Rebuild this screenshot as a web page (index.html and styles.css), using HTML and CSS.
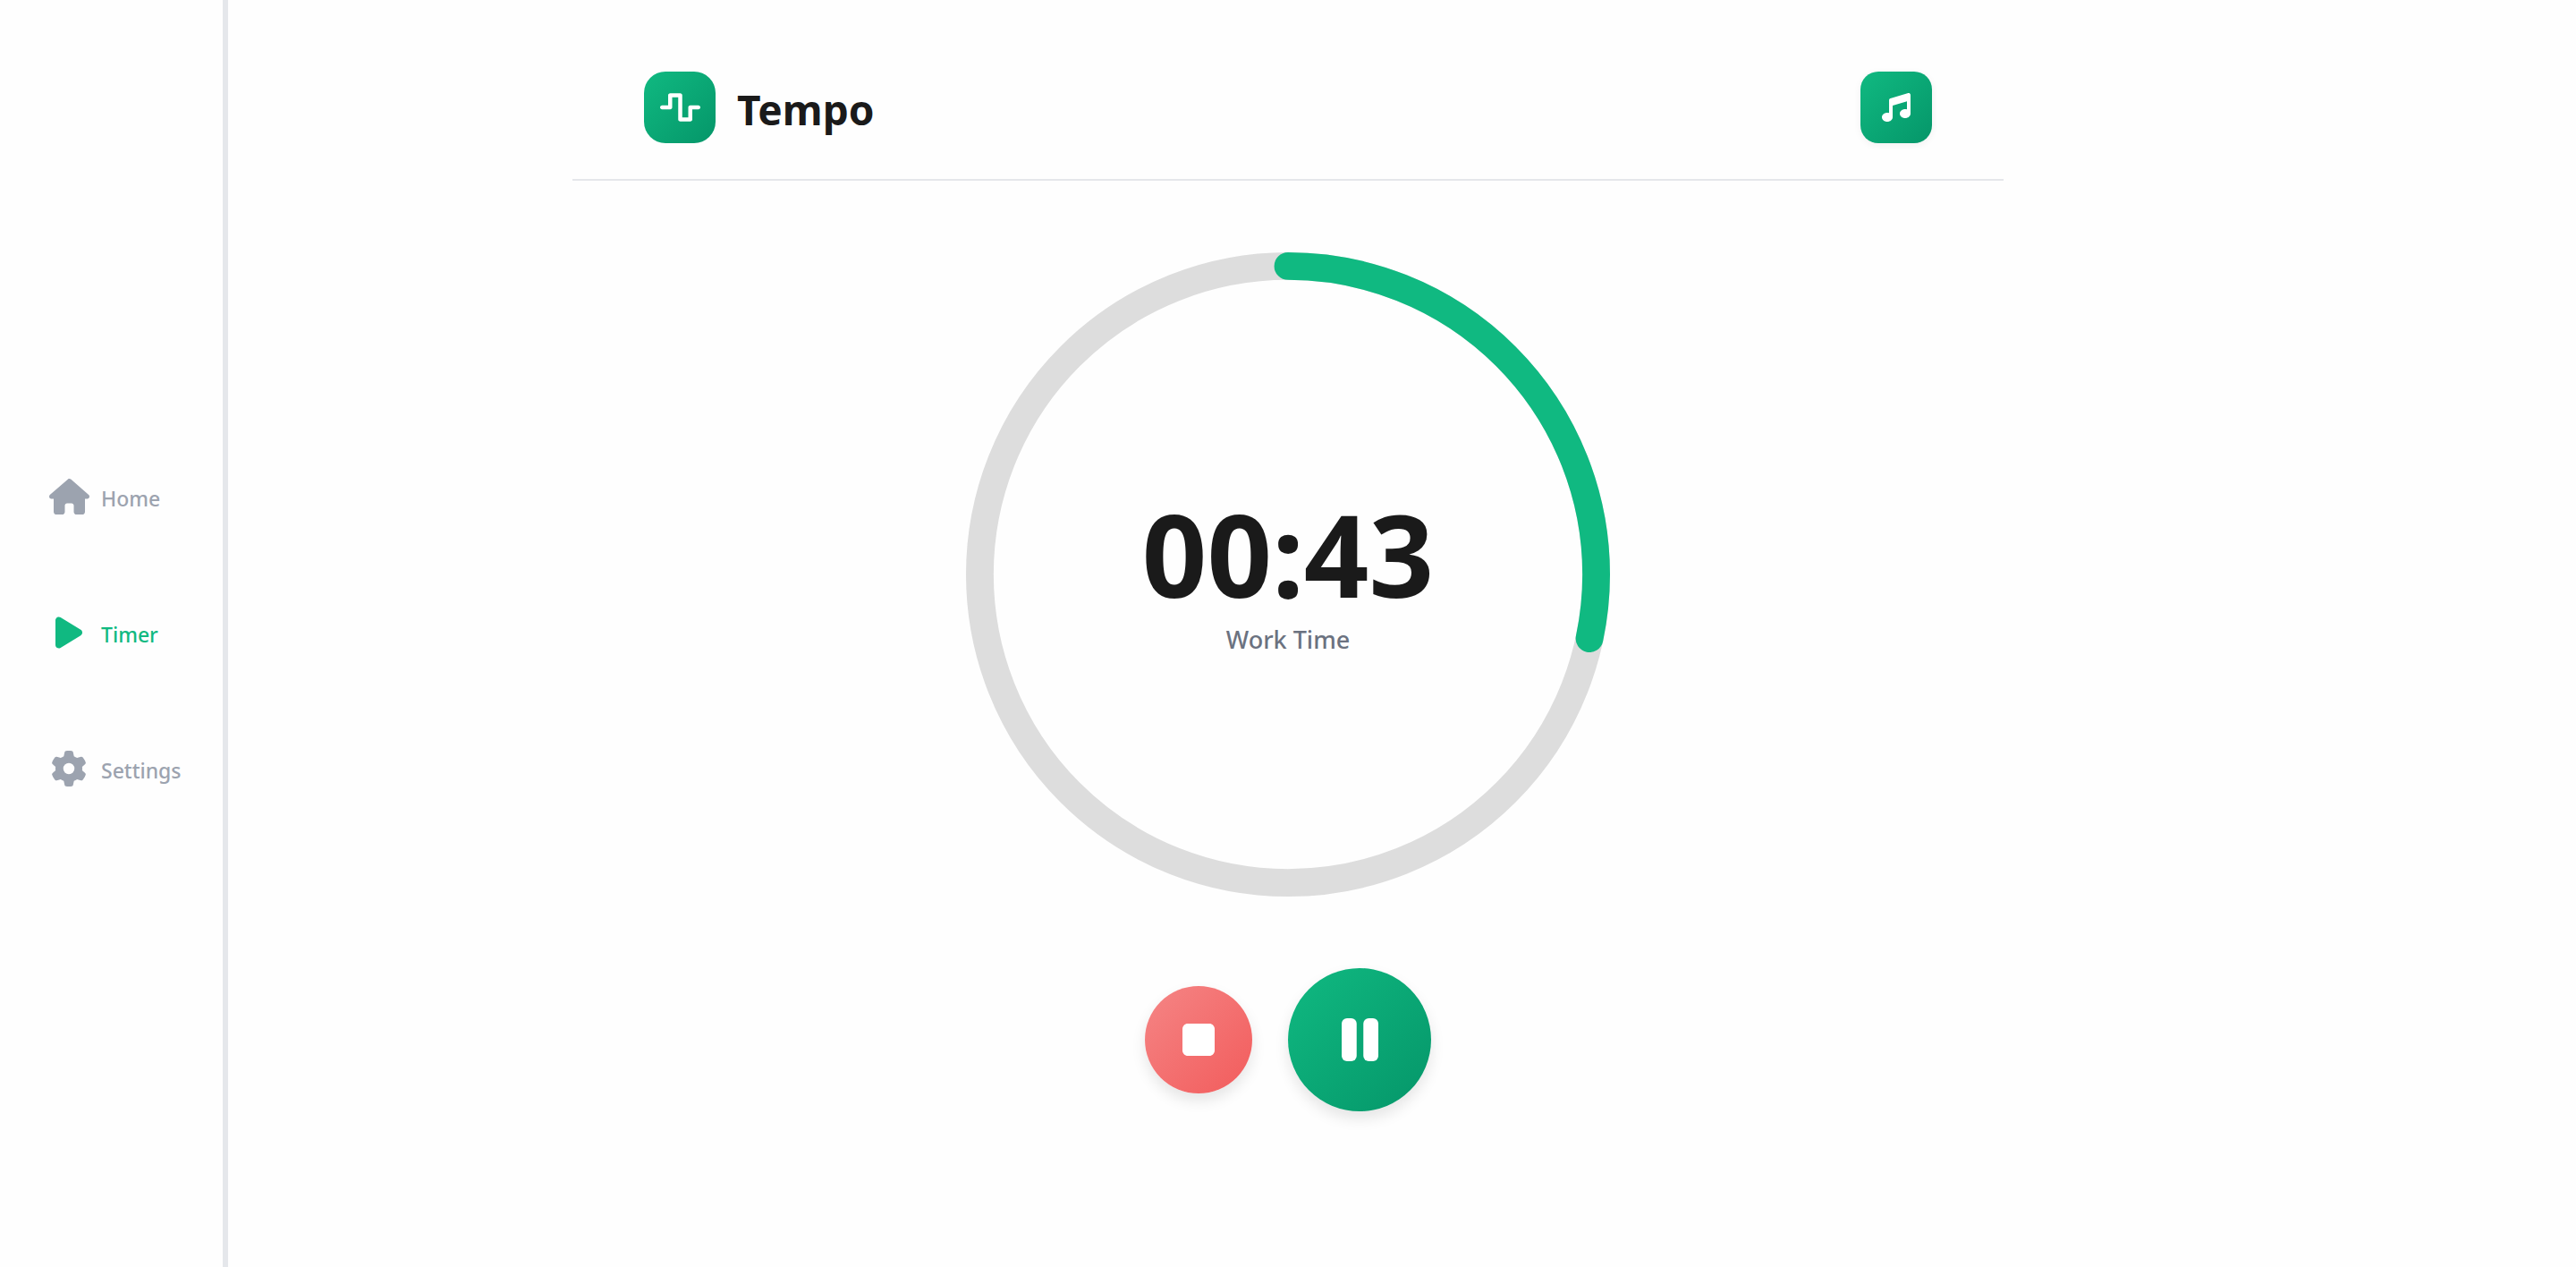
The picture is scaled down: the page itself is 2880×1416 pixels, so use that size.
FILE: index.html
```html
<!DOCTYPE html>
<html lang="en">
<head>
<meta charset="utf-8">
<meta name="viewport" content="width=device-width, initial-scale=1">
<title>Tempo</title>
<link rel="stylesheet" href="styles.css">
</head>
<body>
<div class="app">
  <nav class="sidebar" aria-label="Main">
    <a class="nav-item" href="#home">
      <span class="nav-icon"><svg viewBox="0 0 576 512" aria-hidden="true"><path d="M575.8 255.5c0 18-15 32.1-32 32.1h-32l.7 160.2c0 2.7-.2 5.4-.5 8.1V472c0 22.1-17.9 40-40 40H456c-1.1 0-2.2 0-3.3-.1c-1.4 .1-2.8 .1-4.2 .1H416 392c-22.1 0-40-17.9-40-40V448 384c0-17.7-14.3-32-32-32H256c-17.7 0-32 14.3-32 32v64 24c0 22.1-17.9 40-40 40H160 128.1c-1.5 0-3-.1-4.5-.2c-1.2 .1-2.4 .2-3.6 .2H104c-22.1 0-40-17.9-40-40V360c0-.9 0-1.9 .1-2.8V287.6H32c-18 0-32-14-32-32.1c0-9 3-17 10-24L266.4 8c7-7 15-8 22-8s15 2 21 7L564.8 231.5c8 7 12 15 11 24z"/></svg></span>
      <span class="nav-label">Home</span>
    </a>
    <a class="nav-item active" href="#timer" aria-current="page">
      <span class="nav-icon"><svg viewBox="0 0 384 512" aria-hidden="true"><path d="M73 39c-14.8-9.1-33.4-9.4-48.5-.9S0 62.6 0 80V432c0 17.4 9.4 33.4 24.5 41.9s33.7 8.1 48.5-.9L361 297c14.3-8.7 23-24.2 23-41s-8.7-32.2-23-41L73 39z"/></svg></span>
      <span class="nav-label">Timer</span>
    </a>
    <a class="nav-item" href="#settings">
      <span class="nav-icon"><svg viewBox="0 0 512 512" aria-hidden="true"><path d="M495.9 166.6c3.2 8.7 .5 18.4-6.4 24.6l-43.3 39.4c1.1 8.3 1.7 16.8 1.7 25.4s-.6 17.1-1.7 25.4l43.3 39.4c6.9 6.2 9.6 15.9 6.4 24.6c-4.4 11.9-9.7 23.3-15.8 34.3l-4.7 8.1c-6.6 11-14 21.4-22.1 31.2c-5.9 7.2-15.7 9.6-24.5 6.8l-55.7-17.7c-13.4 10.3-28.2 18.9-44 25.4l-12.5 57.1c-2 9.1-9 16.3-18.2 17.8c-13.8 2.3-28 3.5-42.5 3.5s-28.7-1.2-42.5-3.5c-9.2-1.5-16.2-8.7-18.2-17.8l-12.5-57.1c-15.8-6.5-30.6-15.1-44-25.4L83.1 425.9c-8.8 2.8-18.6 .3-24.5-6.8c-8.1-9.8-15.5-20.2-22.1-31.2l-4.7-8.1c-6.1-11-11.4-22.4-15.8-34.3c-3.2-8.7-.5-18.4 6.4-24.6l43.3-39.4C64.6 273.1 64 264.6 64 256s.6-17.1 1.7-25.4L22.4 191.2c-6.9-6.2-9.6-15.9-6.4-24.6c4.4-11.9 9.7-23.3 15.8-34.3l4.7-8.1c6.6-11 14-21.4 22.1-31.2c5.9-7.2 15.7-9.6 24.5-6.8l55.7 17.7c13.4-10.3 28.2-18.9 44-25.4l12.5-57.1c2-9.1 9-16.3 18.2-17.8C227.3 1.2 241.5 0 256 0s28.7 1.2 42.5 3.5c9.2 1.5 16.2 8.7 18.2 17.8l12.5 57.1c15.8 6.5 30.6 15.1 44 25.4l55.7-17.7c8.8-2.8 18.6-.3 24.5 6.8c8.1 9.8 15.5 20.2 22.1 31.2l4.7 8.1c6.1 11 11.4 22.4 15.8 34.3zM256 336a80 80 0 1 0 0-160 80 80 0 1 0 0 160z"/></svg></span>
      <span class="nav-label">Settings</span>
    </a>
  </nav>

  <div class="content">
    <header class="header">
      <div class="brand">
        <span class="logo"><svg viewBox="0 0 640 512" aria-hidden="true"><path d="M128 64c0-17.7 14.3-32 32-32H320c17.7 0 32 14.3 32 32V416h96V256c0-17.7 14.3-32 32-32H608c17.7 0 32 14.3 32 32s-14.3 32-32 32H512V448c0 17.7-14.3 32-32 32H320c-17.7 0-32-14.3-32-32V96H192V256c0 17.7-14.3 32-32 32H32c-17.7 0-32-14.3-32-32s14.3-32 32-32h96V64z"/></svg></span>
        <h1 class="title">Tempo</h1>
      </div>
      <button class="music" type="button" aria-label="Music"><svg viewBox="0 0 512 512" aria-hidden="true"><path d="M499.1 6.3c8.1 6 12.9 15.6 12.9 25.7v72V368c0 44.2-43 80-96 80s-96-35.8-96-80s43-80 96-80c11.2 0 22 1.6 32 4.6V147L192 223.8V432c0 44.2-43 80-96 80s-96-35.8-96-80s43-80 96-80c11.2 0 22 1.6 32 4.6V200 128c0-14.1 9.3-26.6 22.8-30.7l320-96c9.7-2.9 20.2-1.1 28.3 5z"/></svg></button>
    </header>

    <main class="timer">
      <div class="dial">
        <svg class="ring" viewBox="0 0 280 280" aria-hidden="true">
          <circle class="ring-track" cx="140" cy="140" r="134"/>
          <circle class="ring-progress" cx="140" cy="140" r="134" pathLength="60" stroke-dasharray="17 60" transform="rotate(-90 140 140)"/>
        </svg>
        <div class="readout">
          <div class="time" role="timer">00:43</div>
          <div class="phase">Work Time</div>
        </div>
      </div>
      <div class="controls">
        <button class="control stop" type="button" aria-label="Stop"><svg viewBox="0 0 384 512" aria-hidden="true"><path d="M0 128C0 92.7 28.7 64 64 64H320c35.3 0 64 28.7 64 64V384c0 35.3-28.7 64-64 64H64c-35.3 0-64-28.7-64-64V128z"/></svg></button>
        <button class="control pause" type="button" aria-label="Pause"><svg viewBox="0 0 328 512" aria-hidden="true"><rect y="64" width="134" height="384" rx="48"/><rect x="194" y="64" width="134" height="384" rx="48"/></svg></button>
      </div>
    </main>
  </div>
</div>
</body>
</html>
```
FILE: styles.css
```css
:root {
  --green: #10b981;
  --green-dark: #059669;
  --ink: #1a1a1a;
  --muted: #6b7280;
  --faint: #9ca3af;
  --line: #e5e7eb;
}

* {
  box-sizing: border-box;
}

body {
  margin: 0;
  background: #fefefe;
  color: var(--ink);
  font-family: "Segoe UI", "Noto Sans", "Open Sans", sans-serif;
}

svg {
  display: block;
  fill: currentColor;
}

button {
  padding: 0;
  border: 0;
  color: #fff;
  cursor: pointer;
}

/* The empty third column balances the sidebar so the content stays centred. */
.app {
  display: grid;
  grid-template-columns: 255px minmax(0, 1fr) 255px;
  min-height: 100vh;
}

.sidebar {
  display: flex;
  flex-direction: column;
  justify-content: center;
  gap: 80px;
  padding: 0 0 2px 53px;
  border-right: 6px solid var(--line);
}

.nav-item {
  display: flex;
  align-items: center;
  gap: 12px;
  height: 72px;
  color: var(--faint);
  text-decoration: none;
}

.nav-item.active {
  color: var(--green);
}

.nav-icon {
  display: flex;
  justify-content: center;
  width: 48px;
}

.nav-icon svg {
  height: 40px;
}

.nav-label {
  padding-top: 4px;
  font-size: 23px;
  font-weight: 500;
  line-height: 32px;
}

.content {
  width: 100%;
  max-width: 1600px;
  margin: 0 auto;
}

.header {
  display: flex;
  align-items: center;
  justify-content: space-between;
  padding: 80px 80px 40px;
  border-bottom: 2px solid var(--line);
}

.brand {
  display: flex;
  align-items: center;
  gap: 24px;
}

.logo,
.music {
  display: flex;
  align-items: center;
  justify-content: center;
  width: 80px;
  height: 80px;
  background: linear-gradient(135deg, var(--green), var(--green-dark));
  color: #fff;
}

.logo {
  border-radius: 24px;
}

.logo svg {
  height: 36px;
}

.music {
  border-radius: 20px;
  box-shadow: 0 2px 8px rgba(0, 0, 0, 0.06);
}

.music svg {
  height: 32px;
}

.title {
  margin: 0;
  padding-top: 4px;
  font-size: 46px;
  font-weight: 700;
  line-height: 64px;
}

.timer {
  display: flex;
  flex-direction: column;
  align-items: center;
  gap: 80px;
  padding: 80px;
}

.dial {
  display: grid;
  place-items: center;
  width: 100%;
  max-width: 720px;
}

.ring,
.readout {
  grid-area: 1 / 1;
}

.ring {
  width: 100%;
  fill: none;
  stroke-width: 12;
}

.ring-track {
  stroke: #ddd;
}

.ring-progress {
  stroke: var(--green);
  stroke-linecap: round;
}

.readout {
  display: flex;
  flex-direction: column;
  align-items: center;
  gap: 18px;
}

.time {
  font-size: 127px;
  font-weight: 700;
  line-height: 128px;
}

.phase {
  color: var(--muted);
  font-size: 27px;
  font-weight: 500;
  line-height: 28px;
}

.controls {
  display: flex;
  align-items: center;
  gap: 40px;
}

.control {
  display: flex;
  align-items: center;
  justify-content: center;
  border-radius: 50%;
  box-shadow: 0 8px 16px rgba(0, 0, 0, 0.1);
}

.stop {
  width: 120px;
  height: 120px;
  background: linear-gradient(135deg, #f58585, #f25c5c);
}

.stop svg {
  height: 48px;
}

.pause {
  width: 160px;
  height: 160px;
  background: linear-gradient(135deg, var(--green), var(--green-dark));
}

.pause svg {
  height: 64px;
}
```
